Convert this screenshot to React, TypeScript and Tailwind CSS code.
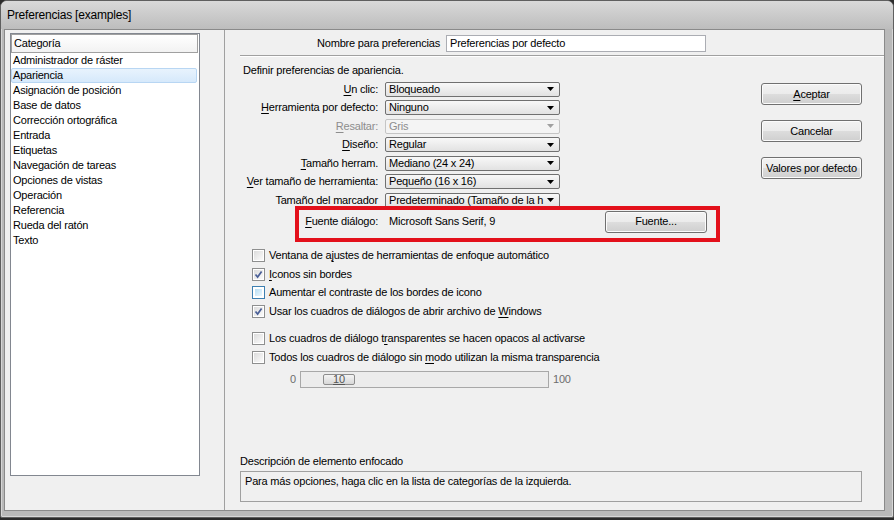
import React from 'react';

const U = ({ children }: { children: React.ReactNode }) => (
  <span className="underline underline-offset-[2px]">{children}</span>
);

const Combo = ({ value, disabled }: { value: string; disabled?: boolean }) => (
  <div
    className={
      disabled
        ? 'w-[175px] h-[15px] flex items-center rounded-[2px] border border-[#c5c5c5] bg-[#f4f4f4] text-[#8d8d8d] pl-[3px]'
        : 'w-[175px] h-[15px] flex items-center rounded-[2px] border border-[#707070] bg-gradient-to-b from-[#f8f8f8] to-[#e2e2e2] pl-[3px]'
    }
  >
    <span className="flex-1 overflow-hidden whitespace-nowrap">{value}</span>
    <svg width="7" height="4" viewBox="0 0 7 4" className="mr-[5px] shrink-0">
      <path d="M0 0h7L3.5 4z" fill={disabled ? '#a0a0a0' : '#000'} />
    </svg>
  </div>
);

const Check = ({ checked, hot }: { checked?: boolean; hot?: boolean }) => (
  <span
    className={
      hot
        ? 'w-[13px] h-[13px] shrink-0 border border-[#3c7fb1] bg-white p-[2px] flex'
        : 'w-[13px] h-[13px] shrink-0 border border-[#8e8f8f] bg-white p-[1px] flex'
    }
  >
    <span
      className={
        hot
          ? 'flex-1 bg-gradient-to-br from-[#b9def3] to-[#e9f7fe] flex items-center justify-center'
          : 'flex-1 bg-gradient-to-br from-[#dcdcdc] to-[#fbfbfb] flex items-center justify-center'
      }
    >
      {checked && (
        <svg width="9" height="9" viewBox="0 0 9 9">
          <path d="M1.5 4.5L3.6 7L7.6 1.5" stroke="#4a5f97" strokeWidth="1.7" fill="none" />
        </svg>
      )}
    </span>
  </span>
);

const Btn = ({ children, className }: { children: React.ReactNode; className?: string }) => (
  <div
    className={`h-[22px] flex items-center justify-center rounded-[3px] border border-[#707070] bg-[linear-gradient(#f2f2f2,#ebebeb_50%,#dddddd_50%,#cfcfcf)] shadow-[inset_0_0_0_1px_#fbfbfb] ${className ?? ''}`}
  >
    {children}
  </div>
);

const categories = [
  'Administrador de ráster',
  'Apariencia',
  'Asignación de posición',
  'Base de datos',
  'Corrección ortográfica',
  'Entrada',
  'Etiquetas',
  'Navegación de tareas',
  'Opciones de vistas',
  'Operación',
  'Referencia',
  'Rueda del ratón',
  'Texto',
];

const combos: { label: React.ReactNode; value: string; disabled?: boolean }[] = [
  { label: <><U>U</U>n clic:</>, value: 'Bloqueado' },
  { label: <><U>H</U>erramienta por defecto:</>, value: 'Ninguno' },
  { label: <><U>R</U>esaltar:</>, value: 'Gris', disabled: true },
  { label: <><U>D</U>iseño:</>, value: 'Regular' },
  { label: <><U>T</U>amaño herram.</>, value: 'Mediano (24 x 24)' },
  { label: <><U>V</U>er tamaño de herramienta:</>, value: 'Pequeño (16 x 16)' },
  { label: 'Tamaño del marcador', value: 'Predeterminado (Tamaño de la h' },
];

const checks1: { text: React.ReactNode; checked?: boolean; hot?: boolean }[] = [
  { text: <>Ventana de a<U>j</U>ustes de herramientas de enfoque automático</> },
  { text: <><U>I</U>conos sin bordes</>, checked: true },
  { text: 'Aumentar el contraste de los bordes de icono', hot: true },
  { text: <>Usar los cuadros de diálogos de abrir archivo de <U>W</U>indows</>, checked: true },
];

const checks2: { text: React.ReactNode; checked?: boolean }[] = [
  { text: <>Los cuadros de diálogo t<U>r</U>ansparentes se hacen opacos al activarse</> },
  { text: <>Todos los cuadros de diálogo sin <U>m</U>odo utilizan la misma transparencia</> },
];

export default function App() {
  return (
    <div className="w-[894px] h-[520px] bg-[#2b2b2b] font-['Liberation_Sans',Arial,sans-serif] text-[11px] leading-[13px] tracking-[-0.2px] text-black">
      <div className="w-[894px] h-[518px] flex flex-col rounded-t-[7px] rounded-b-[2px] border border-[#5f5f5f] bg-[#b9b9b9] shadow-[inset_0_0_0_1px_#d6d6d6]">
        {/* title bar */}
        <div className="h-[28px] flex items-center pl-[6px] text-[12px] rounded-t-[6px] bg-gradient-to-b from-[#d9d9d9] to-[#bdbdbd]">
          Preferencias [examples]
        </div>

        {/* client area */}
        <div className="flex-1 flex ml-[3px] mr-[8px] mb-[6px] border border-[#8a8a8a] bg-[#f0f0f0]">
          {/* categories */}
          <div className="w-[220px] border-r border-[#a0a0a0] pl-[5px] pt-[3px]">
            <div className="w-[190px] h-[443px] border border-[#828790] bg-white">
              <div className="w-[187px] h-[19px] flex items-center pl-[2px] border border-[#a0a0a0] bg-gradient-to-b from-white to-[#f2f2f2]">
                Categoría
              </div>
              {categories.map((c) => (
                <div
                  key={c}
                  className={
                    c === 'Apariencia'
                      ? 'h-[15px] w-[186px] flex items-center pl-[1px] rounded-[2px] border border-[#b8d6f3] bg-gradient-to-b from-[#e8f3fd] to-[#d6e9fb]'
                      : 'h-[15px] flex items-center pl-[2px]'
                  }
                >
                  {c}
                </div>
              ))}
            </div>
          </div>

          {/* settings */}
          <div className="flex-1 flex flex-col">
            <div className="pt-[5px] flex items-center">
              <span className="w-[215px] text-right">Nombre para preferencias</span>
              <div className="ml-[6px] w-[260px] h-[17px] flex items-center pl-[3px] border border-[#abadb3] bg-white">
                Preferencias por defecto
              </div>
            </div>
            <div className="mt-[3px] ml-[15px] border-t border-[#a0a0a0] border-b border-b-white" />

            <div className="flex">
              <div className="flex-1 flex flex-col">
                <div className="mt-[7px] pl-[18px]">Definir preferencias de apariencia.</div>
                <div className="mt-[3px] flex flex-col">
                  {combos.map((r, i) => (
                    <div key={i} className="h-[18.5px] flex items-center">
                      <span className={r.disabled ? 'w-[153px] text-right text-[#8d8d8d]' : 'w-[153px] text-right'}>
                        {r.label}
                      </span>
                      <div className="ml-[7px]">
                        <Combo value={r.value} disabled={r.disabled} />
                      </div>
                    </div>
                  ))}
                </div>

                <div className="mt-[-4px] ml-[70px] w-[425px] h-[36px] border-4 border-[#e3101b]">
                  <div className="h-[24px] flex items-center">
                    <span className="w-[79px] text-right">
                      <U>F</U>uente diálogo:
                    </span>
                    <span className="ml-[11px]">Microsoft Sans Serif, 9</span>
                    <Btn className="ml-auto mr-[9px] w-[102px]">Fuente...</Btn>
                  </div>
                </div>

                <div className="mt-[5px] pl-[27px] flex flex-col">
                  {checks1.map((c, i) => (
                    <div key={i} className="h-[18.5px] flex items-center">
                      <Check checked={c.checked} hot={c.hot} />
                      <span className="ml-[4px]">{c.text}</span>
                    </div>
                  ))}
                  <div className="h-[9px]" />
                  {checks2.map((c, i) => (
                    <div key={i} className="h-[18.5px] flex items-center">
                      <Check checked={c.checked} />
                      <span className="ml-[4px]">{c.text}</span>
                    </div>
                  ))}
                </div>

                <div className="mt-[4px] pl-[65px] flex items-center text-[#6d6d6d]">
                  <span className="w-[6px]">0</span>
                  <div className="ml-[4px] w-[249px] h-[17px] flex items-center border border-[#a8a8a8] bg-[#ececec]">
                    <div className="ml-[22px] w-[32px] h-[11px] flex items-center justify-center rounded-[2px] border border-[#8d8d8d] bg-gradient-to-b from-[#f4f4f4] to-[#d8d8d8] text-[#555] leading-[10px]">
                      <span className="underline underline-offset-[1px]">10</span>
                    </div>
                  </div>
                  <span className="ml-[4px]">100</span>
                </div>
              </div>

              <div className="w-[101px] mr-[22px] pt-[26px] flex flex-col gap-[15px]">
                <Btn>
                  <U>A</U>ceptar
                </Btn>
                <Btn>Cancelar</Btn>
                <Btn>Valores por defecto</Btn>
              </div>
            </div>

            <div className="mt-auto pl-[15px] pr-[22px] pb-[8px]">
              <div>Descripción de elemento enfocado</div>
              <div className="mt-[3px] h-[31px] border border-[#a0a0a0] pl-[4px] pt-[3px]">
                Para más opciones, haga clic en la lista de categorías de la izquierda.
              </div>
            </div>
          </div>
        </div>
      </div>
    </div>
  );
}
